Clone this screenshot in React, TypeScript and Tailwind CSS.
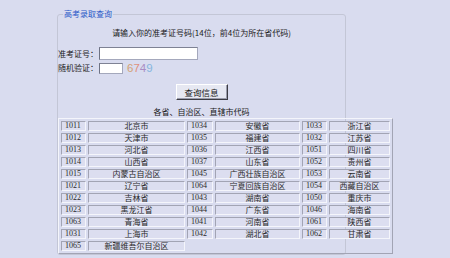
const rows: string[][] = [
    ['1011', '北京市', '1034', '安徽省', '1033', '浙江省'],
    ['1012', '天津市', '1035', '福建省', '1032', '江苏省'],
    ['1013', '河北省', '1036', '江西省', '1051', '四川省'],
    ['1014', '山西省', '1037', '山东省', '1052', '贵州省'],
    ['1015', '内蒙古自治区', '1045', '广西壮族自治区', '1053', '云南省'],
    ['1021', '辽宁省', '1064', '宁夏回族自治区', '1054', '西藏自治区'],
    ['1022', '吉林省', '1043', '湖南省', '1050', '重庆市'],
    ['1023', '黑龙江省', '1044', '广东省', '1046', '海南省'],
    ['1063', '青海省', '1041', '河南省', '1061', '陕西省'],
    ['1031', '上海市', '1042', '湖北省', '1062', '甘肃省'],
    ['1065', '新疆维吾尔自治区'],
];

// widths include the 1px inset border on each side
const colWidths = ['w-[25px]', 'w-[97px]', 'w-[26px]', 'w-[85px]', 'w-[25px]', 'w-[61px]'];

const cellBase =
    'h-[10px] p-0 bg-[#dcdef0] border border-t-[#a2a4b4] border-l-[#a2a4b4] border-b-[#f4f5fb] border-r-[#f4f5fb] text-[8px] leading-[8px] text-[#2a2a2a] whitespace-nowrap overflow-hidden';

const CodeTable = () => (
    <table className="table-fixed w-[335px] border-separate border-spacing-x-[2px] border-spacing-y-[2.2px] border border-t-[#f4f5fb] border-l-[#f4f5fb] border-b-[#a2a4b4] border-r-[#a2a4b4]">
        <tbody>
            {rows.map((row) => (
                <tr key={row[0]}>
                    {row.map((cell, i) => (
                        <td
                            key={i}
                            className={`${cellBase} ${colWidths[i]} ${
                                i % 2 === 0
                                    ? "pl-[3px] text-left font-['Liberation_Serif','Noto_Sans_CJK_SC',serif]"
                                    : 'text-center'
                            }`}
                        >
                            {cell}
                        </td>
                    ))}
                </tr>
            ))}
        </tbody>
    </table>
);

const App = () => {
    return (
        <div className="w-[450px] h-[258px] overflow-hidden bg-[#d9dcef] pl-[57px] pt-[9px] font-['Noto_Sans_CJK_SC',sans-serif] text-[#1a1a1a]">
            <fieldset className="w-[289px] min-w-0 rounded-[3px] border border-[#c3c6d6]">
                <legend className="ml-[5px] px-[1px] text-[8px] leading-[10px] text-[#2a58c8]">
                    高考录取查询
                </legend>
                <p className="mt-[8px] text-center text-[8px] leading-[12px]">
                    请输入你的准考证号码(14位，前4位为所在省代码)
                </p>
                <div className="mt-[8px] flex h-[13px] items-center">
                    <span className="w-[41px] text-[8px] leading-[10px]">准考证号：</span>
                    <input
                        type="text"
                        className="h-[13px] w-[99px] border border-[#a4a8bc] border-l-[#6e7284] border-t-[#7e8294] bg-white"
                    />
                </div>
                <div className="mt-[2px] flex h-[12px] items-center">
                    <span className="w-[41px] text-[8px] leading-[10px]">随机验证：</span>
                    <input
                        type="text"
                        className="h-[11px] w-[24px] border border-[#a4a8bc] border-l-[#6e7284] border-t-[#7e8294] bg-white"
                    />
                    <span className="ml-[4px] font-['Liberation_Sans',sans-serif] text-[11.5px] leading-[12px]">
                        <span className="text-[#d4a274]">6</span>
                        <span className="text-[#e0907c]">7</span>
                        <span className="text-[#a98cc4]">4</span>
                        <span className="text-[#86b6de]">9</span>
                    </span>
                </div>
                <div className="mt-[10px] flex justify-center">
                    <button
                        type="button"
                        className="h-[16px] w-[52px] border border-t-white border-l-white border-b-[#3c3c44] border-r-[#3c3c44] bg-[#e6e8f2] text-[8.5px] leading-[12px] shadow-[inset_-1px_-1px_0_#9a9cac]"
                    >
                        查询信息
                    </button>
                </div>
                <p className="mt-[6px] text-center text-[8px] leading-[12px]">各省、自治区、直辖市代码</p>
                <CodeTable />
            </fieldset>
        </div>
    );
};

export default App;
